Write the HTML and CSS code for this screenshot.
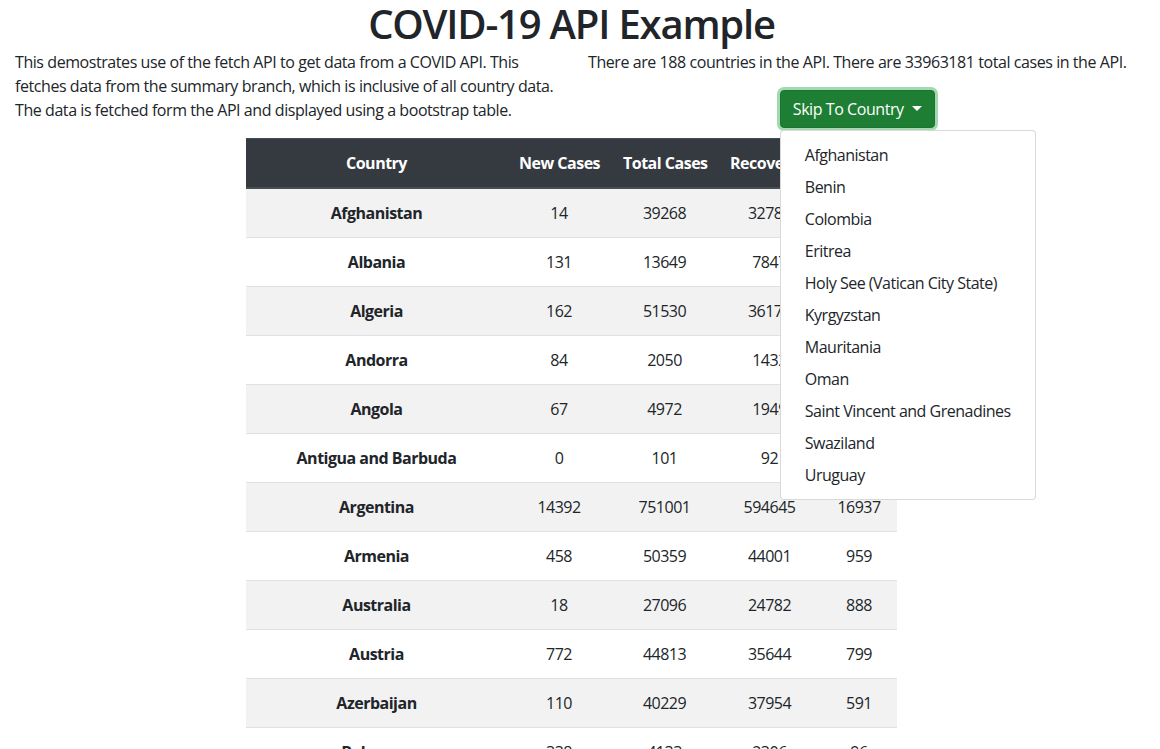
FILE: index.html
```html
<!DOCTYPE html>
<html lang="en">
<head>
<meta charset="utf-8">
<title>COVID-19 API Example</title>
<link rel="stylesheet" href="styles.css">
</head>
<body>
<div class="page">
  <h1 class="title">COVID-19 API Example</h1>
  <div class="intro">
    <p class="desc">This demostrates use of the fetch API to get data from a COVID API. This fetches data from the summary branch, which is inclusive of all country data. The data is fetched form the API and displayed using a bootstrap table.</p>
    <div class="summary">
      <p class="totals">There are 188 countries in the API. There are 33963181 total cases in the API.</p>
      <div class="dropdown">
        <button class="toggle" type="button">Skip To Country<span class="caret"></span></button>
        <div class="menu">
          <a class="item">Afghanistan</a>
          <a class="item">Benin</a>
          <a class="item">Colombia</a>
          <a class="item">Eritrea</a>
          <a class="item">Holy See (Vatican City State)</a>
          <a class="item">Kyrgyzstan</a>
          <a class="item">Mauritania</a>
          <a class="item">Oman</a>
          <a class="item">Saint Vincent and Grenadines</a>
          <a class="item">Swaziland</a>
          <a class="item">Uruguay</a>
        </div>
      </div>
    </div>
  </div>
  <table class="cases">
    <colgroup>
      <col class="c-country"><col class="c-new"><col class="c-total"><col class="c-rec"><col class="c-deaths">
    </colgroup>
    <thead>
      <tr><th>Country</th><th>New Cases</th><th>Total Cases</th><th>Recovered</th><th>Deaths</th></tr>
    </thead>
    <tbody>
      <tr><th>Afghanistan</th><td>14</td><td>39268</td><td>32789</td><td>1458</td></tr>
      <tr><th>Albania</th><td>131</td><td>13649</td><td>7847</td><td>380</td></tr>
      <tr><th>Algeria</th><td>162</td><td>51530</td><td>36174</td><td>1726</td></tr>
      <tr><th>Andorra</th><td>84</td><td>2050</td><td>1432</td><td>53</td></tr>
      <tr><th>Angola</th><td>67</td><td>4972</td><td>1949</td><td>183</td></tr>
      <tr><th>Antigua and Barbuda</th><td>0</td><td>101</td><td>92</td><td>3</td></tr>
      <tr><th>Argentina</th><td>14392</td><td>751001</td><td>594645</td><td>16937</td></tr>
      <tr><th>Armenia</th><td>458</td><td>50359</td><td>44001</td><td>959</td></tr>
      <tr><th>Australia</th><td>18</td><td>27096</td><td>24782</td><td>888</td></tr>
      <tr><th>Austria</th><td>772</td><td>44813</td><td>35644</td><td>799</td></tr>
      <tr><th>Azerbaijan</th><td>110</td><td>40229</td><td>37954</td><td>591</td></tr>
      <tr><th>Bahamas</th><td>338</td><td>4133</td><td>2306</td><td>96</td></tr>
    </tbody>
  </table>
</div>
</body>
</html>
```
FILE: styles.css
```css
html, body {
  margin: 0;
  padding: 0;
  background: #fff;
}
body {
  font-family: "Open Sans", "Noto Sans", sans-serif;
  font-size: 16px;
  line-height: 24px;
  color: #212529;
  letter-spacing: -0.5px;
}
.page {
  width: 1143px;
}
.title {
  margin: 0 0 2px;
  font-size: 40px;
  line-height: 48px;
  font-weight: 600;
  text-align: center;
  letter-spacing: -1.2px;
}
.intro {
  display: grid;
  grid-template-columns: 1fr 1fr;
  column-gap: 30px;
  padding: 0 15px;
  letter-spacing: -0.43px;
}
.desc {
  margin: 0 0 16px;
}
.summary {
  text-align: center;
}
.totals {
  margin: 0 0 16px;
}
.dropdown {
  position: relative;
  display: inline-block;
}
.toggle {
  font: inherit;
  letter-spacing: inherit;
  color: #fff;
  background: #1e7e34;
  border: 1px solid #1c7430;
  border-radius: 4px;
  padding: 6px 12px;
  line-height: 24px;
  box-shadow: 0 0 0 3px rgba(72, 180, 97, 0.5);
  cursor: pointer;
}
.caret {
  display: inline-block;
  margin-left: 8px;
  vertical-align: 4px;
  border-top: 5px solid #fff;
  border-left: 5px solid transparent;
  border-right: 5px solid transparent;
}
.menu {
  position: absolute;
  top: 100%;
  left: 0;
  margin-top: 2px;
  z-index: 10;
  display: flex;
  flex-direction: column;
  padding: 8px 0;
  background: #fff;
  border: 1px solid rgba(0, 0, 0, 0.15);
  border-radius: 4px;
  text-align: left;
  white-space: nowrap;
  letter-spacing: -0.5px;
}
.item {
  display: block;
  padding: 4px 24px;
  color: #212529;
}
.cases {
  margin: 0 auto;
  width: 651px;
  table-layout: fixed;
  border-collapse: collapse;
}
.c-country { width: 261px; }
.c-new { width: 104px; }
.c-total { width: 107px; }
.c-rec { width: 103px; }
.c-deaths { width: 76px; }
.cases th, .cases td {
  padding: 12px;
  text-align: center;
  border-top: 1px solid #dee2e6;
  white-space: nowrap;
  overflow: hidden;
}
.cases tbody th {
  font-weight: 700;
}
.cases thead th {
  color: #fff;
  background: #343a40;
  font-weight: 700;
  border-top: 1px solid #454d55;
  border-bottom: 2px solid #454d55;
}
.cases tbody tr:nth-child(odd) {
  background: #f2f2f2;
}
```
